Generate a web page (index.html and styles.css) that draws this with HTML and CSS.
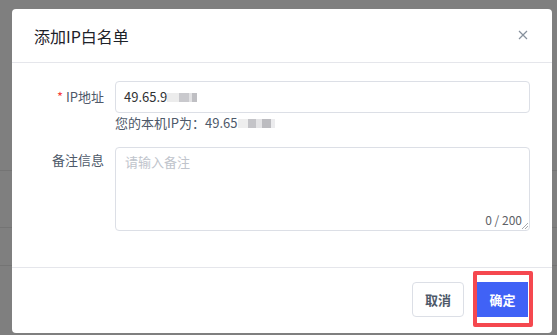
FILE: index.html
```html
<!DOCTYPE html>
<html lang="zh-CN">
<head>
<meta charset="UTF-8">
<meta name="viewport" content="width=device-width, initial-scale=1.0">
<title>添加IP白名单</title>
<link rel="stylesheet" href="styles.css">
</head>
<body>

<!-- page behind the mask -->
<div class="page">
    <div class="page-row"></div>
    <div class="page-row"></div>
    <div class="page-row"></div>
</div>

<div class="mask">
    <div class="dialog">
        <div class="dialog-header">
            <span class="dialog-title">添加IP白名单</span>
            <button type="button" class="dialog-close" aria-label="关闭">
                <svg width="10" height="10" viewBox="0 0 10 10">
                    <path d="M1 1L9 9M9 1L1 9" stroke="#86909c" stroke-width="1.2" fill="none"/>
                </svg>
            </button>
        </div>

        <div class="dialog-body">
            <div class="form-item">
                <label class="form-label"><span class="required">*</span> IP地址</label>
                <div class="form-content">
                    <div class="input">49.65.9<span class="blur blur-a"></span></div>
                    <div class="hint">您的本机IP为：49.65<span class="blur blur-b"></span></div>
                </div>
            </div>

            <div class="form-item">
                <label class="form-label label-top">备注信息</label>
                <div class="form-content">
                    <div class="textarea">
                        <div class="placeholder">请输入备注</div>
                        <span class="count">0 / 200</span>
                        <svg class="resize" width="7" height="7" viewBox="0 0 7 7">
                            <path d="M7 1L1 7M7 4L4 7" stroke="#909399" stroke-width="0.8"/>
                        </svg>
                    </div>
                </div>
            </div>
        </div>

        <div class="dialog-footer">
            <button type="button" class="btn">取消</button>
            <button type="button" class="btn btn-primary">确定<span class="mark"></span></button>
        </div>
    </div>
</div>

</body>
</html>
```

FILE: styles.css
```css
body {
    margin: 0;
    font-family: "Noto Sans CJK SC", "Noto Sans", sans-serif;
    background: #fff;
    width: 557px;
    height: 335px;
    overflow: hidden;
}

.page {
    padding-top: 170px;
}
.page-row {
    height: 56px;
    border-top: 1px solid #e8e8e8;
}
.page-row:nth-child(2) {
    height: 37px;
}

.mask {
    position: fixed;
    inset: 0;
    background: rgba(0, 0, 0, 0.5);
}

.dialog {
    margin: 9px 0 0 12px;
    width: 540px;
    height: 324px;
    background: #fff;
    border-radius: 4px;
}

.dialog-header {
    height: 53px;
    border-bottom: 1px solid #e5e6eb;
    display: flex;
    align-items: center;
    justify-content: space-between;
    padding: 0 24px 0 22px;
}
.dialog-title {
    font-size: 16px;
    color: #1d2129;
    padding-top: 1px;
}
.dialog-close {
    border: 0;
    background: none;
    padding: 0;
    width: 10px;
    height: 10px;
    display: flex;
    margin-top: -2px;
}

.dialog-body {
    height: 186px;
    padding: 18px 22px 0 24px;
}

.form-item {
    display: flex;
    margin-bottom: 14px;
}
.form-label {
    width: 68px;
    padding-right: 11px;
    text-align: right;
    font-size: 13px;
    color: #4e5969;
    line-height: 32px;
    height: 32px;
}
.form-label.label-top {
    line-height: 26px;
}
.form-label .required {
    color: #f53f3f;
}
.form-content {
    flex: 1;
}

.input {
    height: 30px;
    border: 1px solid #dcdfe6;
    border-radius: 4px;
    padding: 0 8px;
    font-size: 13px;
    line-height: 30px;
    color: #303133;
    display: flex;
    align-items: center;
}
.hint {
    font-size: 13px;
    color: #4e5969;
    line-height: 20px;
    height: 20px;
    display: flex;
    align-items: center;
}

.blur {
    display: inline-block;
    height: 9px;
}
.blur-a {
    width: 30px;
    background: linear-gradient(90deg, #ececec 0 12px, #c9c9cd 12px 22px, #e2e2e4 22px 25px, #bfbfc3 25px 30px);
    margin-top: 1px;
}
.blur-b {
    width: 37px;
    background: linear-gradient(90deg, #eeeeee 0 10px, #c4c4c8 10px 18px, #e4e4e6 18px 24px, #bcbcc0 24px 33px, #ececee 33px 37px);
    margin-top: 1px;
}

.textarea {
    position: relative;
    height: 74px;
    border: 1px solid #dcdfe6;
    border-radius: 4px;
    padding: 4px 9px;
    box-sizing: content-box;
    width: calc(100% - 20px);
}
.placeholder {
    font-size: 13px;
    color: #c0c4cc;
    line-height: 20px;
}
.count {
    position: absolute;
    right: 7px;
    bottom: 1px;
    font-size: 12px;
    color: #606266;
    line-height: 18px;
}
.resize {
    position: absolute;
    right: 1px;
    bottom: 1px;
}

.dialog-footer {
    border-top: 1px solid #e5e6eb;
    padding: 14px 24px 0;
    display: flex;
    justify-content: flex-end;
    gap: 13px;
}

.btn {
    height: 35px;
    width: 52px;
    border: 1px solid #dcdfe6;
    border-radius: 4px;
    background: #fff;
    font-family: inherit;
    font-size: 13px;
    font-weight: bold;
    color: #4e5969;
    padding: 0;
    cursor: pointer;
}
.btn-primary {
    position: relative;
    width: 51px;
    border: 0;
    border-radius: 0;
    background: #4062f6;
    color: #fff;
}

/* annotation frame around the confirm button */
.mark {
    position: absolute;
    top: -11px;
    bottom: -10px;
    left: -4px;
    right: -5px;
    border: 4px solid #f5484f;
    border-radius: 2px;
    pointer-events: none;
}
```
